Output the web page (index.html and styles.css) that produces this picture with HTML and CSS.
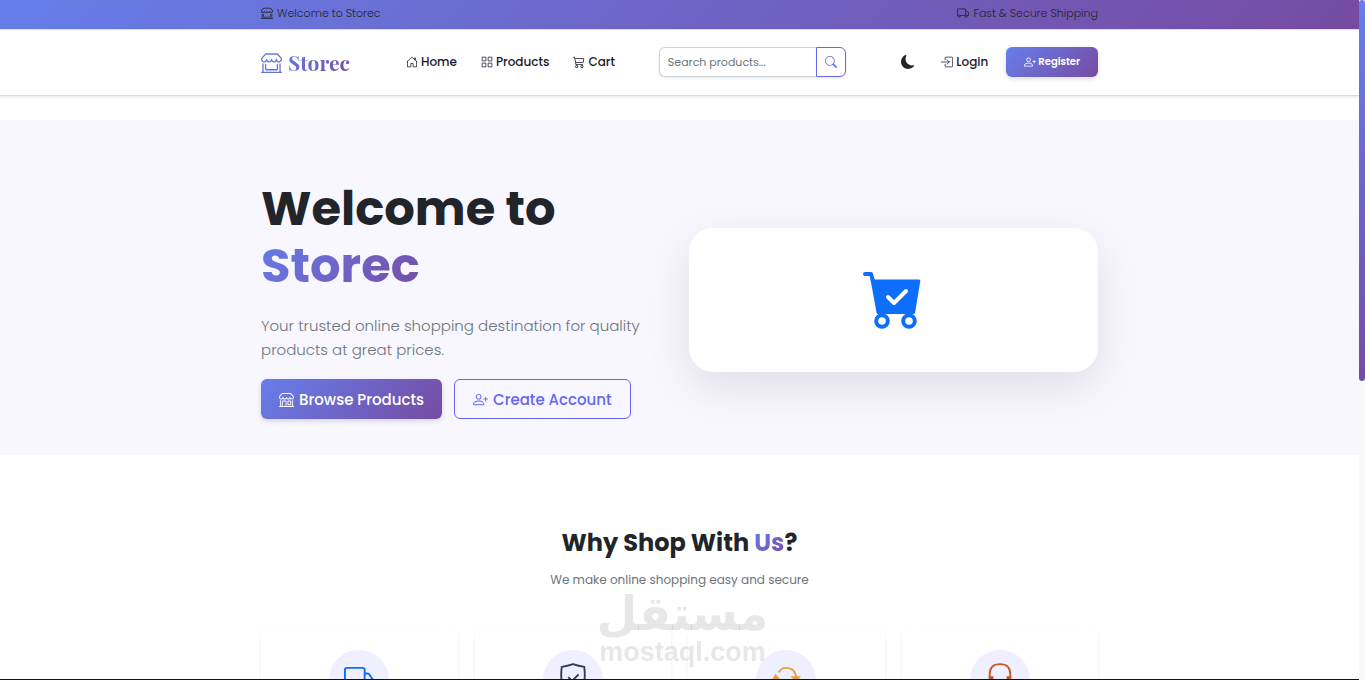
FILE: index.html
```html
<!DOCTYPE html>
<html lang="en">
<head>
    <meta charset="UTF-8">
    <meta name="viewport" content="width=device-width, initial-scale=1.0">
    <title>Storec</title>
    <link rel="stylesheet" href="styles.css">
</head>
<body>
    <svg class="sprite" aria-hidden="true">
        <symbol id="shop-window" viewBox="0 0 16 16"><path d="M2.97 1.35A1 1 0 0 1 3.73 1h8.54a1 1 0 0 1 .76.35l2.609 3.044A1.5 1.5 0 0 1 16 5.37v.255a2.375 2.375 0 0 1-4.25 1.458A2.37 2.37 0 0 1 9.875 8 2.37 2.37 0 0 1 8 7.083 2.37 2.37 0 0 1 6.125 8a2.37 2.37 0 0 1-1.875-.917A2.375 2.375 0 0 1 0 5.625V5.37a1.5 1.5 0 0 1 .361-.976zm1.78 4.275a1.375 1.375 0 0 0 2.75 0 .5.5 0 0 1 1 0 1.375 1.375 0 0 0 2.75 0 .5.5 0 0 1 1 0 1.375 1.375 0 1 0 2.75 0V5.37a.5.5 0 0 0-.12-.325L12.27 2H3.73L1.12 5.045A.5.5 0 0 0 1 5.37v.255a1.375 1.375 0 0 0 2.75 0 .5.5 0 0 1 1 0M1.5 8.5A.5.5 0 0 1 2 9v6h12V9a.5.5 0 0 1 1 0v6h.5a.5.5 0 0 1 0 1H.5a.5.5 0 0 1 0-1H1V9a.5.5 0 0 1 .5-.5m2 .5a.5.5 0 0 1 .5.5V13h8V9.5a.5.5 0 0 1 1 0V13a1 1 0 0 1-1 1H4a1 1 0 0 1-1-1V9.5a.5.5 0 0 1 .5-.5"/></symbol>
        <symbol id="shop" viewBox="0 0 16 16"><path d="M2.97 1.35A1 1 0 0 1 3.73 1h8.54a1 1 0 0 1 .76.35l2.609 3.044A1.5 1.5 0 0 1 16 5.37v.255a2.375 2.375 0 0 1-4.25 1.458A2.37 2.37 0 0 1 9.875 8 2.37 2.37 0 0 1 8 7.083 2.37 2.37 0 0 1 6.125 8a2.37 2.37 0 0 1-1.875-.917A2.375 2.375 0 0 1 0 5.625V5.37a1.5 1.5 0 0 1 .361-.976zm1.78 4.275a1.375 1.375 0 0 0 2.75 0 .5.5 0 0 1 1 0 1.375 1.375 0 0 0 2.75 0 .5.5 0 0 1 1 0 1.375 1.375 0 1 0 2.75 0V5.37a.5.5 0 0 0-.12-.325L12.27 2H3.73L1.12 5.045A.5.5 0 0 0 1 5.37v.255a1.375 1.375 0 0 0 2.75 0 .5.5 0 0 1 1 0M1.5 8.5A.5.5 0 0 1 2 9v6h1v-5a1 1 0 0 1 1-1h3a1 1 0 0 1 1 1v5h6V9a.5.5 0 0 1 1 0v6h.5a.5.5 0 0 1 0 1H.5a.5.5 0 0 1 0-1H1V9a.5.5 0 0 1 .5-.5M4 15h3v-5H4zm5-5a1 1 0 0 1 1-1h2a1 1 0 0 1 1 1v3a1 1 0 0 1-1 1h-2a1 1 0 0 1-1-1zm3 0h-2v3h2z"/></symbol>
        <symbol id="truck" viewBox="0 0 16 16"><path d="M0 3.5A1.5 1.5 0 0 1 1.5 2h9A1.5 1.5 0 0 1 12 3.5V5h1.02a1.5 1.5 0 0 1 1.17.563l1.481 1.85a1.5 1.5 0 0 1 .329.938V10.5a1.5 1.5 0 0 1-1.5 1.5H14a2 2 0 1 1-4 0H5a2 2 0 1 1-3.998-.085A1.5 1.5 0 0 1 0 10.5zm1.294 7.456A2 2 0 0 1 4.732 11h5.536a2 2 0 0 1 .732-.732V3.5a.5.5 0 0 0-.5-.5h-9a.5.5 0 0 0-.5.5v7a.5.5 0 0 0 .294.456M12 10a2 2 0 0 1 1.732 1h.768a.5.5 0 0 0 .5-.5V8.35a.5.5 0 0 0-.11-.312l-1.48-1.85A.5.5 0 0 0 13.02 6H12zm-9 1a1 1 0 1 0 0 2 1 1 0 0 0 0-2m9 0a1 1 0 1 0 0 2 1 1 0 0 0 0-2"/></symbol>
        <symbol id="house" viewBox="0 0 16 16"><path d="M2 7v7.5h4.5V10h3v4.500H14V7M1.500 7.500 8 1.500l6.500 6M11.500 4.500v-2h1v3" fill="none" stroke="currentColor" stroke-linejoin="round" stroke-linecap="round"/></symbol>
        <symbol id="grid" viewBox="0 0 16 16"><path d="M1.500 1.500h5v5h-5zM9.500 1.500h5v5h-5zM1.500 9.500h5v5h-5zM9.500 9.500h5v5h-5z" fill="none" stroke="currentColor" stroke-linejoin="round"/></symbol>
        <symbol id="cart" viewBox="0 0 16 16"><path d="M0 1.5A.5.5 0 0 1 .5 1H2a.5.5 0 0 1 .485.379L2.89 3H14.5a.5.5 0 0 1 .49.598l-1 5a.5.5 0 0 1-.465.401l-9.397.472L4.415 11H13a.5.5 0 0 1 0 1H4a.5.5 0 0 1-.491-.408L2.01 3.607 1.61 2H.5a.5.5 0 0 1-.5-.5M3.102 4l.84 4.479 9.144-.459L13.89 4zM5 12a2 2 0 1 0 0 4 2 2 0 0 0 0-4m7 0a2 2 0 1 0 0 4 2 2 0 0 0 0-4m-7 1a1 1 0 1 1 0 2 1 1 0 0 1 0-2m7 0a1 1 0 1 1 0 2 1 1 0 0 1 0-2"/></symbol>
        <symbol id="search" viewBox="0 0 16 16"><path d="M11.742 10.344a6.5 6.5 0 1 0-1.397 1.398h-.001q.044.06.098.115l3.85 3.85a1 1 0 0 0 1.415-1.414l-3.85-3.85a1 1 0 0 0-.115-.1zM12 6.500a5.500 5.500 0 1 1-11 0 5.500 5.500 0 0 1 11 0"/></symbol>
        <symbol id="moon" viewBox="0 0 16 16"><path d="M6 .278a.77.77 0 0 1 .08.858 7.2 7.2 0 0 0-.878 3.46c0 4.021 3.278 7.277 7.318 7.277q.792-.001 1.533-.16a.79.79 0 0 1 .81.316.73.73 0 0 1-.031.893A8.35 8.35 0 0 1 8.344 16C3.734 16 0 12.286 0 7.71 0 4.266 2.114 1.312 5.124.06A.75.75 0 0 1 6 .278"/></symbol>
        <symbol id="login" viewBox="0 0 16 16"><path d="M5.500 5V2.500a1 1 0 0 1 1-1h8a1 1 0 0 1 1 1v11a1 1 0 0 1-1 1h-8a1 1 0 0 1-1-1V11M0 8h11M8 5l3 3-3 3" fill="none" stroke="currentColor" stroke-linecap="round" stroke-linejoin="round"/></symbol>
        <symbol id="person-plus" viewBox="0 0 16 16"><path d="M6 8a3 3 0 1 0 0-6 3 3 0 0 0 0 6m2-3a2 2 0 1 1-4 0 2 2 0 0 1 4 0m4 8c0 1-1 1-1 1H1s-1 0-1-1 1-4 6-4 6 3 6 4m-1-.004c-.001-.246-.154-.986-.832-1.664C9.516 10.68 8.289 10 6 10s-3.516.68-4.168 1.332c-.678.678-.83 1.418-.832 1.664zM13.5 5a.5.5 0 0 1 .5.5V7h1.5a.5.5 0 0 1 0 1H14v1.5a.5.5 0 0 1-1 0V8h-1.5a.5.5 0 0 1 0-1H13V5.500a.5.5 0 0 1 .5-.5"/></symbol>
    </svg>

    <div class="page">
        <div class="topbar">
            <div class="container">
                <span class="icon-text"><svg class="icon"><use href="#shop-window"/></svg>Welcome to Storec</span>
                <span class="icon-text"><svg class="icon"><use href="#truck"/></svg>Fast &amp; Secure Shipping</span>
            </div>
        </div>

        <header class="header">
            <div class="container">
                <a class="brand" href="#">
                    <svg class="brand-icon" viewBox="0 0 16 16">
                        <defs>
                            <linearGradient id="brand-fill" x1="0" y1="0" x2="1" y2="1">
                                <stop offset="0" stop-color="#667eea"/>
                                <stop offset="1" stop-color="#6a68cc"/>
                            </linearGradient>
                        </defs>
                        <use href="#shop-window" fill="url(#brand-fill)"/>
                    </svg>
                    <span class="gradient-text">Storec</span>
                </a>
                <nav class="nav">
                    <a href="#"><svg class="icon"><use href="#house"/></svg>Home</a>
                    <a href="#"><svg class="icon"><use href="#grid"/></svg>Products</a>
                    <a href="#"><svg class="icon"><use href="#cart"/></svg>Cart</a>
                </nav>
                <form class="search">
                    <input type="text" placeholder="Search products..." aria-label="Search products">
                    <button type="button" aria-label="Search"><svg class="icon"><use href="#search"/></svg></button>
                </form>
                <div class="account">
                    <button class="theme-toggle" type="button" aria-label="Dark mode"><svg><use href="#moon"/></svg></button>
                    <a class="login" href="#"><svg class="icon"><use href="#login"/></svg>Login</a>
                    <a class="btn btn-primary btn-small" href="#"><svg class="icon"><use href="#person-plus"/></svg>Register</a>
                </div>
            </div>
        </header>

        <section class="hero">
            <div class="container">
                <div class="hero-text">
                    <h1>Welcome to <br><span class="gradient-text">Storec</span></h1>
                    <p>Your trusted online shopping destination for quality products at great prices.</p>
                    <div class="hero-buttons">
                        <a class="btn btn-primary" href="#"><svg class="icon"><use href="#shop"/></svg>Browse Products</a>
                        <a class="btn btn-outline" href="#"><svg class="icon"><use href="#person-plus"/></svg>Create Account</a>
                    </div>
                </div>
                <div class="hero-card">
                    <svg class="hero-cart" viewBox="0 -1 62 58">
                        <path d="M2 2h6l2 7" fill="none" stroke="#0d6efd" stroke-width="4" stroke-linecap="round" stroke-linejoin="round"/>
                        <path d="M7.500 7.500H56q1.500 0 1.300 1.500L52 41q-.3 1-1.500 1H15q-1.200 0-1.400-1z" fill="#0d6efd"/>
                        <path d="m25 25 6 6 12-12" fill="none" stroke="#fff" stroke-width="4" stroke-linecap="round" stroke-linejoin="round"/>
                        <circle cx="19" cy="49" r="5.800" fill="none" stroke="#0d6efd" stroke-width="4"/>
                        <circle cx="46" cy="49" r="5.800" fill="none" stroke="#0d6efd" stroke-width="4"/>
                    </svg>
                </div>
            </div>
        </section>

        <section class="features">
            <div class="container">
                <h2>Why Shop With <span class="gradient-text">Us</span>?</h2>
                <p>We make online shopping easy and secure</p>
                <div class="feature-grid">
                    <div class="feature-card">
                        <div class="feature-icon">
                            <svg viewBox="0 0 32 32" stroke="#0d6efd"><path d="M1 24V5q0-2 2-2h17q2 0 2 2v19H1M22 9h3q1 0 2 1l4 6v8h-9"/></svg>
                        </div>
                    </div>
                    <div class="feature-card">
                        <div class="feature-icon">
                            <svg viewBox="0 0 32 32" stroke="#2b3f5c"><path d="M16-1Q10 1 4 2 2 18 7 24q4 5 9 7 5-2 9-7 5-6 3-22-6-1-12-3zM11 13l4 4 7-7"/></svg>
                        </div>
                    </div>
                    <div class="feature-card">
                        <div class="feature-icon">
                            <svg viewBox="0 0 32 32" stroke="#e9a23b"><path d="M8 8q3-5 8-5 10 0 11 11M24 24q-3 5-8 5Q6 29 5 16"/><path d="m23 13 7 0-3 4zM2 16l7 0-4-5z" fill="#e9a23b"/></svg>
                        </div>
                    </div>
                    <div class="feature-card">
                        <div class="feature-icon">
                            <svg viewBox="0 0 32 32" stroke="#c45a2c"><path d="M5 17v-7Q5-1 16-1t11 11v7q0 10-10 10"/><path d="M5 13h3v9H5zM24 13h3v9h-3z" fill="#c45a2c"/></svg>
                        </div>
                    </div>
                </div>
            </div>
        </section>
    </div>

    <div class="scrollbar"><div class="scrollbar-thumb"></div></div>

    <div class="watermark">
        <span class="watermark-ar" lang="ar">مستقل</span>
        <span class="watermark-en">mostaql.com</span>
    </div>
</body>
</html>
```
FILE: styles.css
```css
:root {
    --gradient: linear-gradient(135deg, #667eea 0%, #764ba2 100%);
    --primary: #6366f1;
    --dark: #212529;
    --muted: #6c757d;
}
* {
    box-sizing: border-box;
}
body {
    margin: 0;
    display: grid;
    grid-template-columns: 1fr 6px;
    font-family: Poppins, Inter, sans-serif;
    font-size: 12px;
    color: var(--dark);
    background-color: #fff;
}
a {
    color: inherit;
    text-decoration: none;
}
h1, h2, p {
    margin: 0;
}
.sprite {
    display: none;
}
.page {
    height: 100vh;
    overflow: hidden;
    border-bottom: 1px solid #111;
}
.container {
    width: 100%;
    max-width: 861px;
    margin: 0 auto;
    padding: 0 12px;
}
.icon {
    width: 12px;
    height: 12px;
    flex: none;
    fill: currentColor;
}
.gradient-text {
    background: var(--gradient);
    -webkit-background-clip: text;
    background-clip: text;
    color: transparent;
}

/* top bar */
.topbar {
    height: 29px;
    background: var(--gradient);
    font-size: 11px;
    font-weight: 300;
}
.topbar .container {
    display: flex;
    justify-content: space-between;
    line-height: 26px;
}
.icon-text {
    display: flex;
    align-items: center;
    gap: 4px;
}

/* header */
.header {
    height: 67px;
    border-top: 1px solid #dee2e6;
    border-bottom: 1px solid #d8dbdf;
    box-shadow: 0 1px 3px rgba(0, 0, 0, 0.1);
}
.header .container {
    display: flex;
    align-items: center;
    height: 64px;
}
.brand {
    display: flex;
    align-items: center;
    gap: 6px;
    font-family: "Playfair Display", "Liberation Serif", serif;
    font-size: 21px;
    font-weight: 700;
}
.brand-icon {
    width: 21px;
    height: 21px;
}
.nav {
    display: flex;
    gap: 24px;
    margin-left: 56px;
    font-weight: 500;
}
.nav a,
.login {
    display: flex;
    align-items: center;
    gap: 3px;
    color: #1a1a2e;
}
.search {
    display: flex;
    width: 187px;
    height: 30px;
    margin-left: 44px;
    border-radius: 6px;
    box-shadow: 0 1px 3px rgba(0, 0, 0, 0.1);
}
.search input {
    flex: 1;
    min-width: 0;
    padding: 0 8px;
    border: 1px solid #ced4da;
    border-right: none;
    border-radius: 6px 0 0 6px;
    font: inherit;
    font-size: 11px;
}
.search input::placeholder {
    color: var(--muted);
}
.search button {
    display: flex;
    align-items: center;
    justify-content: center;
    width: 30px;
    padding: 0;
    border: 1px solid var(--primary);
    border-radius: 0 6px 6px 0;
    background: #fff;
    color: var(--primary);
}
.account {
    display: flex;
    align-items: center;
    margin-left: auto;
    font-weight: 500;
}
.theme-toggle {
    display: flex;
    margin-right: 26px;
    padding: 0;
    border: none;
    background: none;
    color: var(--dark);
}
.theme-toggle svg {
    width: 14px;
    height: 14px;
    fill: currentColor;
}
.login {
    margin-right: 18px;
}
.btn {
    display: flex;
    align-items: center;
    justify-content: center;
    gap: 5px;
    height: 40px;
    padding: 0 18px;
    border-radius: 6px;
    font-size: 15px;
    font-weight: 500;
}
.btn .icon {
    width: 15px;
    height: 15px;
}
.btn-primary {
    background: var(--gradient);
    color: #fff;
    box-shadow: 0 2px 5px rgba(0, 0, 0, 0.15);
}
.btn-outline {
    border: 1px solid var(--primary);
    color: var(--primary);
}
.btn-small {
    gap: 2px;
    height: 30px;
    font-size: 10px;
    font-weight: 600;
}
.btn-small .icon {
    width: 12px;
    height: 12px;
}

/* hero */
.hero {
    margin-top: 24px;
    padding: 60px 0 36px;
    background-color: #f8f7ff;
}
.hero .container {
    display: grid;
    grid-template-columns: 1fr 409px;
    gap: 36px;
    align-items: center;
}
.hero h1 {
    margin-bottom: 20px;
    font-size: 48px;
    font-weight: 700;
    line-height: 57px;
}
.hero p {
    margin-bottom: 17px;
    color: var(--muted);
    font-size: 15px;
    font-weight: 300;
    line-height: 24px;
}
.hero-buttons {
    display: flex;
    gap: 12px;
}
.hero-card {
    display: flex;
    align-items: center;
    justify-content: center;
    height: 144px;
    border-radius: 24px;
    background-color: #fff;
    box-shadow: 0 15px 45px rgba(0, 0, 0, 0.1);
}
.hero-cart {
    width: 62px;
    height: 58px;
}

/* features */
.features {
    padding-top: 72px;
    text-align: center;
}
.features h2 {
    font-size: 24px;
    font-weight: 700;
    line-height: 32px;
}
.features p {
    margin-top: 11px;
    color: var(--muted);
    line-height: 20px;
}
.feature-grid {
    display: grid;
    grid-template-columns: repeat(4, 1fr);
    gap: 17px;
    margin-top: 35px;
}
.feature-card {
    height: 180px;
    padding-top: 25px;
    border-radius: 12px;
    box-shadow: 0 2px 4px rgba(0, 0, 0, 0.07);
}
.feature-icon {
    display: flex;
    align-items: center;
    justify-content: center;
    width: 60px;
    height: 60px;
    margin: 0 auto;
    border-radius: 50%;
    background-color: #f0efff;
}
.feature-icon svg {
    width: 30px;
    height: 30px;
    overflow: visible;
    fill: none;
    stroke-width: 2;
}

/* page scrollbar */
.scrollbar {
    background-color: #f8f9fa;
}
.scrollbar-thumb {
    height: 56%;
    border-radius: 3px;
    background: linear-gradient(#667eea, #764ba2);
}

.watermark {
    position: fixed;
    bottom: 14px;
    left: 50%;
    display: flex;
    flex-direction: column;
    align-items: center;
    transform: translateX(-50%);
    color: rgba(120, 120, 120, 0.18);
    font-weight: 700;
    pointer-events: none;
}
.watermark-ar {
    font-family: "DejaVu Sans", sans-serif;
    font-size: 47px;
    line-height: 48px;
}
.watermark-en {
    font-family: "Liberation Sans", sans-serif;
    font-size: 27px;
    line-height: 28px;
}
```
